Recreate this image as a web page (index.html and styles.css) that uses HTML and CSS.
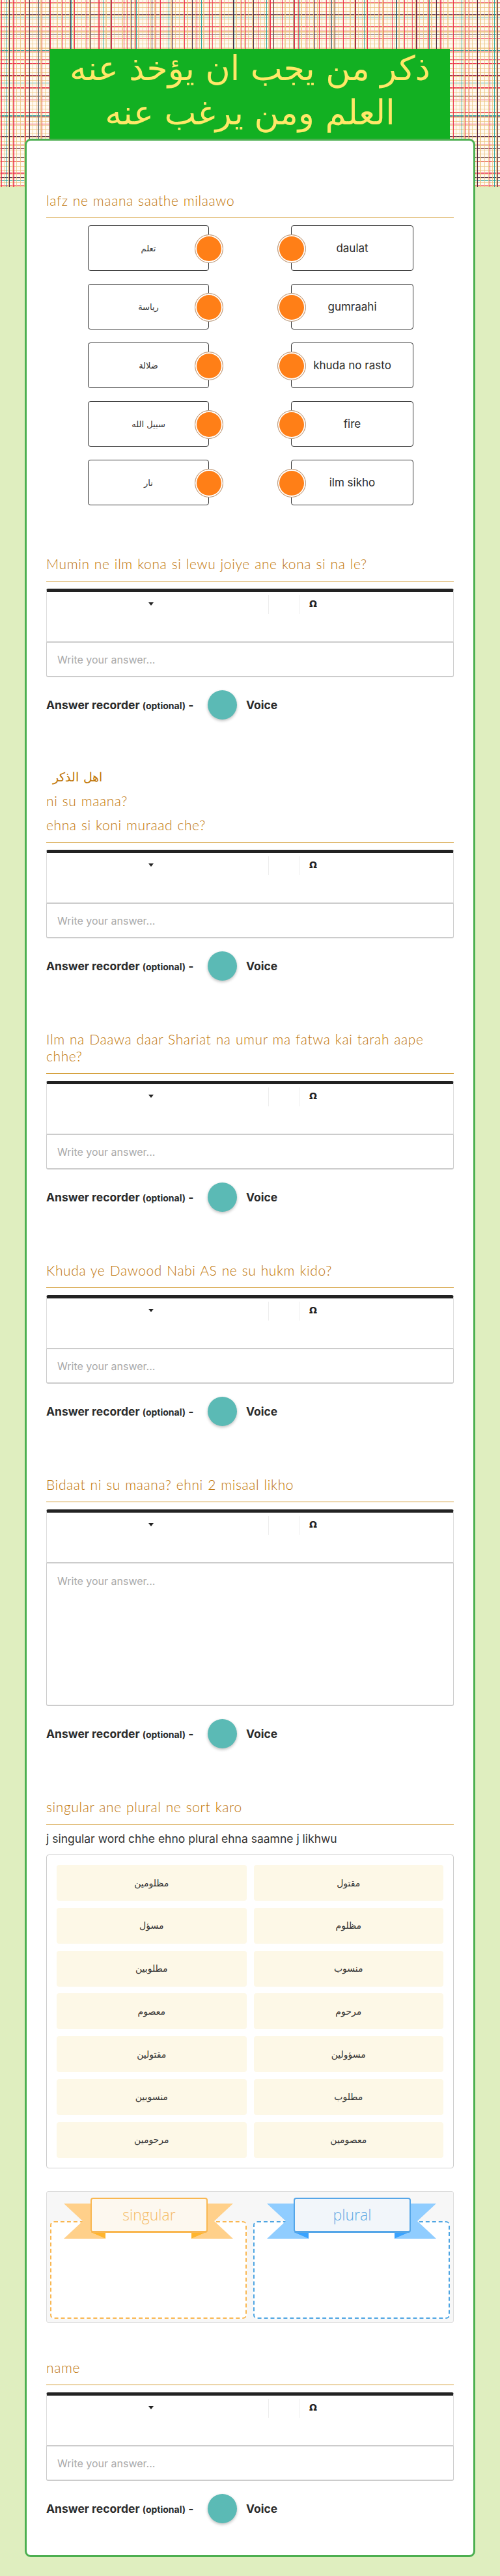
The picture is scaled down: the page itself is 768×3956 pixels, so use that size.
FILE: index.html
```html
<!DOCTYPE html>
<html lang="en">
<head>
<meta charset="utf-8">
<title>Worksheet</title>
<link rel="stylesheet" href="styles.css">
</head>
<body>
<header class="plaid">
  <h1 class="title" dir="rtl"><span class="title-text">ذكر من يجب ان يؤخذ عنه<br>العلم ومن يرغب عنه</span></h1>
</header>
<main class="card">
  <section class="q">
    <h2 class="q-head">lafz ne maana saathe milaawo</h2>
    <div class="match">
      <div class="pair"><div class="box box-l ar">تعلم<span class="dot dot-l"></span></div><div class="box box-r">daulat<span class="dot dot-r"></span></div></div>
      <div class="pair"><div class="box box-l ar">رياسة<span class="dot dot-l"></span></div><div class="box box-r">gumraahi<span class="dot dot-r"></span></div></div>
      <div class="pair"><div class="box box-l ar">ضلالة<span class="dot dot-l"></span></div><div class="box box-r">khuda no rasto<span class="dot dot-r"></span></div></div>
      <div class="pair"><div class="box box-l ar">سبيل الله<span class="dot dot-l"></span></div><div class="box box-r">fire<span class="dot dot-r"></span></div></div>
      <div class="pair"><div class="box box-l ar">نار<span class="dot dot-l"></span></div><div class="box box-r">ilm sikho<span class="dot dot-r"></span></div></div>
    </div>
  </section>

  <section class="q">
    <h2 class="q-head">Mumin ne ilm kona si lewu joiye ane kona si na le?</h2>
    <div class="toolbar"><span class="caret"></span><span class="sep sep-a"></span><span class="sep sep-b"></span><span class="omega">Ω</span></div>
    <div class="answer">Write your answer...</div>
    <div class="rec"><span class="rec-label">Answer recorder <small>(optional)</small> -</span><span class="rec-btn"></span><span class="rec-voice">Voice</span></div>
  </section>

  <section class="q">
    <h2 class="q-head">
      <span class="hl hl-ar" dir="rtl">اهل الذكر</span>
      <span class="hl">ni su maana?</span>
      <span class="hl">ehna si koni muraad che?</span>
    </h2>
    <div class="toolbar"><span class="caret"></span><span class="sep sep-a"></span><span class="sep sep-b"></span><span class="omega">Ω</span></div>
    <div class="answer">Write your answer...</div>
    <div class="rec"><span class="rec-label">Answer recorder <small>(optional)</small> -</span><span class="rec-btn"></span><span class="rec-voice">Voice</span></div>
  </section>

  <section class="q">
    <h2 class="q-head">Ilm na Daawa daar Shariat na umur ma fatwa kai tarah aape<br>chhe?</h2>
    <div class="toolbar"><span class="caret"></span><span class="sep sep-a"></span><span class="sep sep-b"></span><span class="omega">Ω</span></div>
    <div class="answer">Write your answer...</div>
    <div class="rec"><span class="rec-label">Answer recorder <small>(optional)</small> -</span><span class="rec-btn"></span><span class="rec-voice">Voice</span></div>
  </section>

  <section class="q">
    <h2 class="q-head">Khuda ye Dawood Nabi AS ne su hukm kido?</h2>
    <div class="toolbar"><span class="caret"></span><span class="sep sep-a"></span><span class="sep sep-b"></span><span class="omega">Ω</span></div>
    <div class="answer">Write your answer...</div>
    <div class="rec"><span class="rec-label">Answer recorder <small>(optional)</small> -</span><span class="rec-btn"></span><span class="rec-voice">Voice</span></div>
  </section>

  <section class="q">
    <h2 class="q-head">Bidaat ni su maana? ehni 2 misaal likho</h2>
    <div class="toolbar"><span class="caret"></span><span class="sep sep-a"></span><span class="sep sep-b"></span><span class="omega">Ω</span></div>
    <div class="answer answer-tall">Write your answer...</div>
    <div class="rec"><span class="rec-label">Answer recorder <small>(optional)</small> -</span><span class="rec-btn"></span><span class="rec-voice">Voice</span></div>
  </section>

  <section class="q">
    <h2 class="q-head">singular ane plural ne sort karo</h2>
    <p class="hint">j singular word chhe ehno plural ehna saamne j likhwu</p>
    <div class="tiles">
      <div class="tile">مظلومين</div><div class="tile">مقتول</div>
      <div class="tile">مسؤل</div><div class="tile">مظلوم</div>
      <div class="tile">مطلوبين</div><div class="tile">منسوب</div>
      <div class="tile">معصوم</div><div class="tile">مرحوم</div>
      <div class="tile">مقتولين</div><div class="tile">مسؤولين</div>
      <div class="tile">منسوبين</div><div class="tile">مطلوب</div>
      <div class="tile">مرحومين</div><div class="tile">معصومين</div>
    </div>
    <div class="buckets">
      <div class="bucket bucket-o">
        <svg class="ribbon" viewBox="0 0 260 54" aria-hidden="true">
          <polygon class="tail" points="0,0 41,0 41,44 64,54 0,54 29,27"/>
          <polygon class="tail" points="260,0 219,0 219,44 196,54 260,54 231,27"/>
          <polygon class="fold" points="41,44 64,44 64,54"/>
          <polygon class="fold" points="219,44 196,44 196,54"/>
        </svg>
        <div class="label">singular</div>
      </div>
      <div class="bucket bucket-b">
        <svg class="ribbon" viewBox="0 0 260 54" aria-hidden="true">
          <polygon class="tail" points="0,0 41,0 41,44 64,54 0,54 29,27"/>
          <polygon class="tail" points="260,0 219,0 219,44 196,54 260,54 231,27"/>
          <polygon class="fold" points="41,44 64,44 64,54"/>
          <polygon class="fold" points="219,44 196,44 196,54"/>
        </svg>
        <div class="label">plural</div>
      </div>
    </div>
  </section>

  <section class="q q-name">
    <h2 class="q-head">name</h2>
    <div class="toolbar"><span class="caret"></span><span class="sep sep-a"></span><span class="sep sep-b"></span><span class="omega">Ω</span></div>
    <div class="answer">Write your answer...</div>
    <div class="rec"><span class="rec-label">Answer recorder <small>(optional)</small> -</span><span class="rec-btn"></span><span class="rec-voice">Voice</span></div>
  </section>
</main>
</body>
</html>
```
FILE: styles.css
```css
* { box-sizing: border-box; }
html, body { margin: 0; padding: 0; }
body {
  background: #dfeebf;
  font-family: Inter, Roboto, "DejaVu Sans", sans-serif;
  color: #2b2b2b;
  padding-bottom: 34px;
}
.plaid {
  height: 287px;
  padding: 75px 77px 0;
  background-color: #fffaf2;
  background-image:
    repeating-linear-gradient(90deg, transparent 0 14px, rgba(60,30,60,.9) 14px 15px, transparent 15px 31.25px),
    repeating-linear-gradient(90deg, transparent 0 9px, rgba(30,160,150,.9) 9px 10px, transparent 10px 50px),
    repeating-linear-gradient(90deg, transparent 0 2px, rgba(235,40,70,.9) 2px 3px, transparent 3px 18.75px),
    repeating-linear-gradient(90deg, transparent 0 20px, rgba(235,40,70,.7) 20px 21px, transparent 21px 43.75px),
    repeating-linear-gradient(90deg, rgba(235,195,125,.75) 0 1px, transparent 1px 6.25px),
    repeating-linear-gradient(0deg, transparent 0 14px, rgba(60,30,60,.9) 14px 15px, transparent 15px 31.25px),
    repeating-linear-gradient(0deg, transparent 0 9px, rgba(30,160,150,.9) 9px 10px, transparent 10px 50px),
    repeating-linear-gradient(0deg, transparent 0 2px, rgba(235,40,70,.9) 2px 3px, transparent 3px 18.75px),
    repeating-linear-gradient(0deg, transparent 0 20px, rgba(235,40,70,.7) 20px 21px, transparent 21px 43.75px),
    repeating-linear-gradient(0deg, rgba(235,195,125,.75) 0 1px, transparent 1px 6.25px);
}
.title {
  margin: 0;
  height: 138px;
  display: flow-root;
  background: #12b022;
  color: #ffe868;
  font: 400 52px/68px "DejaVu Sans", sans-serif;
  text-align: center;
}
.title-text { display: block; margin-top: -4px; }
.card {
  position: relative;
  margin: -74px 38px 0;
  padding: 2px 30px 49px;
  background: #fff;
  border: 3px solid #4caf50;
  border-radius: 9px;
}
.q { margin-top: 77px; }
.q-name { margin-top: 56px; }
.q-head {
  margin: 0;
  padding-bottom: 13px;
  border-bottom: 1px solid #d29a30;
  font: 300 21px/26px Lato, "DejaVu Sans", sans-serif;
  letter-spacing: .6px;
  word-spacing: 1px;
  color: #bf7608;
}
.hl { display: block; margin-top: 11px; }
.hl-ar {
  margin-top: -2px;
  width: 86px;
  text-align: right;
  white-space: nowrap;
  font-family: "DejaVu Sans", sans-serif;
  font-size: 19px;
  letter-spacing: 0;
}

.match { margin-top: 11px; display: flex; flex-direction: column; gap: 20px; }
.pair { display: flex; padding-left: 64px; gap: 126px; }
.box {
  position: relative;
  height: 70px;
  display: flex;
  align-items: center;
  justify-content: center;
  border: 1px solid #333;
  border-radius: 4px;
  font-size: 17px;
}
.box-l { width: 186px; }
.box-r { width: 188px; }
.ar { font: 400 13px "DejaVu Sans", sans-serif; color: #333; }
.dot {
  position: absolute;
  top: 13px;
  width: 44px;
  height: 44px;
  border-radius: 50%;
  background: #ff7f17;
  border: 1px solid #b5a08c;
  box-shadow: inset 0 0 0 2px #fff;
}
.dot-l { right: -23px; }
.dot-r { left: -22px; }

.toolbar {
  position: relative;
  margin-top: 11px;
  height: 83px;
  border: 1px solid #ddd;
  border-top: 5px solid #222;
  border-bottom: 2px solid #ccc;
  border-radius: 3px 3px 0 0;
}
.caret {
  position: absolute;
  left: 156px;
  top: 16px;
  border: 4px solid transparent;
  border-top: 5px solid #222;
  border-bottom: 0;
}
.sep { position: absolute; top: 5px; width: 1px; height: 29px; background: #eee; }
.sep-a { left: 340px; }
.sep-b { left: 387px; }
.omega {
  position: absolute;
  left: 403px;
  top: 9px;
  font: 700 14px/18px "DejaVu Sans", sans-serif;
  color: #222;
}
.answer {
  height: 53px;
  padding: 14px 16px;
  border: 1px solid #ccc;
  border-top: 0;
  border-bottom-width: 2px;
  border-radius: 0 0 3px 3px;
  font-size: 16px;
  line-height: 24px;
  color: #aaa;
}
.answer-tall { height: 219px; padding-top: 15px; }
.rec {
  margin-top: 20px;
  display: flex;
  align-items: center;
  font-size: 17.5px;
  font-weight: 700;
  color: #2b2b2b;
}
.rec-label { width: 248px; white-space: nowrap; }
.rec-label small { font-size: 14px; }
.rec-btn {
  width: 45px;
  height: 45px;
  border-radius: 50%;
  background: #5bbab5;
  box-shadow: 0 2px 4px rgba(0,0,0,.25);
}
.rec-voice { margin-left: 14px; }

.hint { margin: 10px 0 0; font-size: 17.5px; line-height: 24px; color: #333; }
.tiles {
  margin-top: 12px;
  padding: 15px;
  display: grid;
  grid-template-columns: 1fr 1fr;
  grid-auto-rows: 55px;
  gap: 10.8px 11px;
  border: 1px solid #ccc;
  border-radius: 4px;
}
.tile {
  display: flex;
  align-items: center;
  justify-content: center;
  background: #fdf8e7;
  border-radius: 4px;
  font: 400 14px "DejaVu Sans", sans-serif;
  color: #333;
}
.buckets {
  margin-top: 35px;
  height: 202px;
  padding: 45px 5px 5px;
  display: grid;
  grid-template-columns: 302px 302px;
  gap: 10px;
  background: #f7f7f7;
  border: 1px solid #ddd;
  border-radius: 3px;
}
.bucket {
  position: relative;
  height: 150px;
  background: #fff;
  border: 2px dashed #f9b751;
  border-radius: 6px;
}
.bucket-b { border-color: #4ea5e2; }
.ribbon { position: absolute; left: 19px; top: -29px; width: 260px; height: 54px; }
.bucket-o .tail { fill: #ffd08a; }
.bucket-o .fold { fill: #ffb52e; }
.bucket-b .tail { fill: #90cdff; }
.bucket-b .fold { fill: #3aa3ff; }
.label {
  position: absolute;
  left: 60px;
  top: -38px;
  width: 180px;
  height: 54px;
  display: flex;
  align-items: center;
  justify-content: center;
  background: #fdf8ef;
  border: 2px solid #f9b751;
  border-bottom-width: 3px;
  border-radius: 4px;
  font: 300 23px "Open Sans", sans-serif;
  color: #f5bc68;
}
.bucket-b .label { background: #f2f6fa; border-color: #55a6e8; color: #5fa9e4; }
```
